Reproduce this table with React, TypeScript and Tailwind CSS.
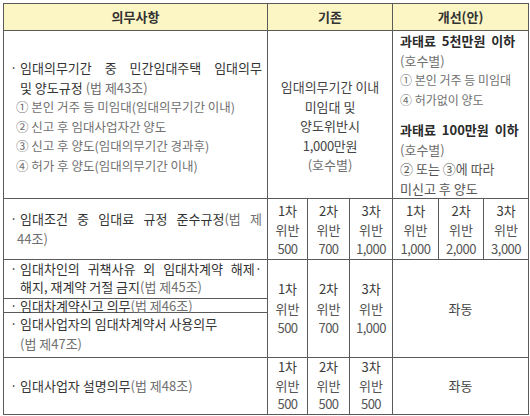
import React from "react";

const B = "border border-[#5a5a5a]";
const LIGHT = "text-[#707070]";

function Bul({ children, justify = true }: { children: React.ReactNode; justify?: boolean }) {
  return (
    <div className="flex">
      <span className="w-[12px] shrink-0 text-left pl-[2px]">·</span>
      <span className={justify ? "flex-1 whitespace-nowrap [text-align-last:justify]" : "flex-1 whitespace-nowrap"}>{children}</span>
    </div>
  );
}

function Cont({ children, indent = 12 }: { children: React.ReactNode; indent?: number }) {
  return <div className={indent === 12 ? "pl-[12px] whitespace-nowrap" : "pl-[9px] whitespace-nowrap"}>{children}</div>;
}

function Steps({ a, b, c, lead = "leading-[19.5px]" }: { a: string; b: string; c: string; lead?: string }) {
  return (
    <div className={`flex flex-col items-center ${lead}`}>
      <span className="text-[#3a3a3a]">{a}</span>
      <span className="text-[#555]">{b}</span>
      <span className="text-[#555] tracking-[-0.5px]">{c}</span>
    </div>
  );
}

export default function App() {
  return (
    <div className="w-[530px] h-[416px] bg-white pt-[3px] pl-[3px] font-['Noto_Sans_CJK_KR',sans-serif] text-[13px] text-[#333]">
      <table className="w-[525px] table-fixed border-collapse">
        <colgroup>
          <col className="w-[264px]" />
          <col className="w-[40px]" />
          <col className="w-[42px]" />
          <col className="w-[43px]" />
          <col className="w-[46px]" />
          <col className="w-[45px]" />
          <col className="w-[45px]" />
        </colgroup>
        <tbody>
          <tr className="h-[27px] bg-[#fcf5c4]">
            <th className={`${B} p-0 font-bold text-[13px] text-[#333] leading-[26px]`}>의무사항</th>
            <th colSpan={3} className={`${B} p-0 font-bold text-[13px] text-[#333] leading-[26px]`}>기존</th>
            <th colSpan={3} className={`${B} p-0 font-bold text-[13px] text-[#333] leading-[26px]`}>개선(안)</th>
          </tr>
          <tr className="h-[168px]">
            <td className={`${B} p-0 align-top`}>
              <div className="pl-[4px] pr-[5px] pt-[27px] leading-[19.5px]">
                <Bul>임대의무기간 중 민간임대주택 임대의무</Bul>
                <Cont>
                  및 양도규정 <span className={LIGHT}>(법 제43조)</span>
                </Cont>
                <div className={`pl-[8px] ${LIGHT} text-[12.5px] whitespace-nowrap`}>① 본인 거주 등 미임대(임대의무기간 이내)</div>
                <div className={`pl-[8px] ${LIGHT} text-[12.5px] whitespace-nowrap`}>② 신고 후 임대사업자간 양도</div>
                <div className={`pl-[8px] ${LIGHT} text-[12.5px] whitespace-nowrap`}>③ 신고 후 양도(임대의무기간 경과후)</div>
                <div className={`pl-[8px] ${LIGHT} text-[12.5px] whitespace-nowrap`}>④ 허가 후 양도(임대의무기간 이내)</div>
              </div>
            </td>
            <td colSpan={3} className={`${B} p-0 align-top`}>
              <div className="pt-[46px] flex flex-col items-center leading-[19.5px] text-[#444]">
                <span>임대의무기간 이내</span>
                <span>미임대 및</span>
                <span>양도위반시</span>
                <span className="tracking-[-0.3px]">1,000만원</span>
                <span className={LIGHT}>(호수별)</span>
              </div>
            </td>
            <td colSpan={3} className={`${B} p-0 align-top`}>
              <div className="pl-[7px] pt-0 leading-[19.5px] whitespace-nowrap">
                <div className="font-bold text-[#2a2a2a] [word-spacing:3px]">과태료 5천만원 이하</div>
                <div className={LIGHT}>(호수별)</div>
                <div className={`${LIGHT} text-[12px]`}>① 본인 거주 등 미임대</div>
                <div className={`${LIGHT} text-[12px]`}>④ 허가없이 양도</div>
                <div className="font-bold text-[#2a2a2a] mt-[11px] [word-spacing:3px]">과태료 100만원 이하</div>
                <div className={LIGHT}>(호수별)</div>
                <div className="text-[#555]">② 또는 ③에 따라</div>
                <div className="text-[#555]">미신고 후 양도</div>
              </div>
            </td>
          </tr>
          <tr className="h-[61px]">
            <td className={`${B} p-0 align-middle`}>
              <div className="pl-[4px] pr-[5px] leading-[20px]">
                <Bul>
                  임대조건 중 임대료 규정 준수규정<span className={LIGHT}>(법 제</span>
                </Bul>
                <Cont indent={9}>
                  <span className={LIGHT}>44조)</span>
                </Cont>
              </div>
            </td>
            <td className={`${B} p-0`}><Steps a="1차" b="위반" c="500" lead="leading-[19px]" /></td>
            <td className={`${B} p-0`}><Steps a="2차" b="위반" c="700" lead="leading-[19px]" /></td>
            <td className={`${B} p-0`}><Steps a="3차" b="위반" c="1,000" lead="leading-[19px]" /></td>
            <td className={`${B} p-0`}><Steps a="1차" b="위반" c="1,000" lead="leading-[19px]" /></td>
            <td className={`${B} p-0`}><Steps a="2차" b="위반" c="2,000" lead="leading-[19px]" /></td>
            <td className={`${B} p-0`}><Steps a="3차" b="위반" c="3,000" lead="leading-[19px]" /></td>
          </tr>
          <tr className="h-[39px]">
            <td className={`${B} p-0 align-top`}>
              <div className="pl-[4px] pr-[5px] pt-[0px] leading-[18px]">
                <Bul>임대차인의 귀책사유 외 임대차계약 해제·</Bul>
                <Cont>
                  해지, 재계약 거절 금지<span className={LIGHT}>(법 제45조)</span>
                </Cont>
              </div>
            </td>
            <td rowSpan={3} className={`${B} p-0`}><Steps a="1차" b="위반" c="500" /></td>
            <td rowSpan={3} className={`${B} p-0`}><Steps a="2차" b="위반" c="700" /></td>
            <td rowSpan={3} className={`${B} p-0`}><Steps a="3차" b="위반" c="1,000" /></td>
            <td rowSpan={3} colSpan={3} className={`${B} p-0 text-center text-[#444]`}>좌동</td>
          </tr>
          <tr className="h-[14px]">
            <td className={`${B} p-0 align-middle`}>
              <div className="pl-[4px] pr-[5px] leading-[12px]">
                <Bul justify={false}>
                  임대차계약신고 의무<span className={LIGHT}>(법 제46조)</span>
                </Bul>
              </div>
            </td>
          </tr>
          <tr className="h-[45px]">
            <td className={`${B} p-0 align-top`}>
              <div className="pl-[4px] pr-[5px] pt-[1px] leading-[20px]">
                <Bul justify={false}>임대사업자의 임대차계약서 사용의무</Bul>
                <Cont>
                  <span className={LIGHT}>(법 제47조)</span>
                </Cont>
              </div>
            </td>
          </tr>
          <tr className="h-[56px]">
            <td className={`${B} p-0 align-middle`}>
              <div className="pl-[4px] pr-[5px] leading-[20px]">
                <Bul justify={false}>
                  임대사업자 설명의무<span className={LIGHT}>(법 제48조)</span>
                </Bul>
              </div>
            </td>
            <td className={`${B} p-0`}><Steps a="1차" b="위반" c="500" lead="leading-[18.5px]" /></td>
            <td className={`${B} p-0`}><Steps a="2차" b="위반" c="500" lead="leading-[18.5px]" /></td>
            <td className={`${B} p-0`}><Steps a="3차" b="위반" c="500" lead="leading-[18.5px]" /></td>
            <td colSpan={3} className={`${B} p-0 text-center text-[#444]`}>좌동</td>
          </tr>
        </tbody>
      </table>
    </div>
  );
}
